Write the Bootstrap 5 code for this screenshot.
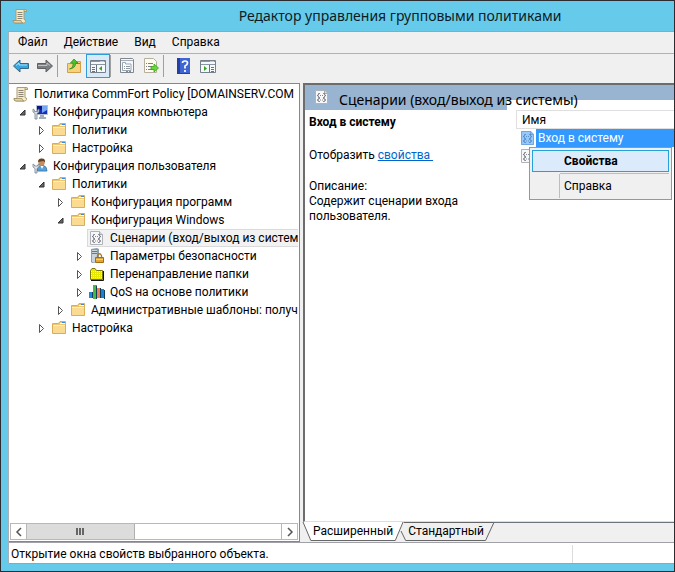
<!DOCTYPE html>
<html lang="ru">
<head>
<meta charset="utf-8">
<meta name="viewport" content="width=device-width, initial-scale=1">
<title>Редактор управления групповыми политиками</title>
<link href="https://cdn.jsdelivr.net/npm/bootstrap@5.3.0/dist/css/bootstrap.min.css" rel="stylesheet">
<style>
body{font-family:Roboto,"Noto Sans",sans-serif;font-size:12px;line-height:18px;color:#000;background:#66cbea}
button{font:inherit;color:inherit;background:none;border:0;padding:0}
.window{border:1px solid #2b2b30;padding:0 0 7px 7px;background:#66cbea}
.titlebar{height:30px}
.titlebar h1,.heading h2{font-family:"Noto Sans","Open Sans",sans-serif;font-size:14px;line-height:20px;font-weight:400}
.titlebar h1{color:#0c1c26;padding-left:98px}
.client{background:#f0f0f0;border-top:1px solid #8ab;border-left:1px solid #a8b0b8}
.menus{height:22px;gap:16px;padding:0 0 1px 9px;border-bottom:1px solid #b0b0b8}
.tools{height:29px;padding:0 0 5px 4px}
.tool{width:24px;height:24px}
.tool.on{border:1px solid #2f9bd8;background:#d8eaf8}
.rule{width:1px;height:22px;background:#a0a0a0}
.icon{width:16px;height:16px;display:block;flex:none}
.back{color:#36a7e2}.forward{color:#7c7f82}
.tree-pane{flex:0 0 291px;border:1px solid #828790;border-left:0;background:#fff}
.tree{padding:1px 1px 0 0}
.tree-row{height:18px;padding-left:4px}
.tree-row .label{padding-left:5px;white-space:pre}
.tree-row.lv1{padding-left:9px}.tree-row.lv2{padding-left:28px}.tree-row.lv3{padding-left:47px}.tree-row.lv4{padding-left:66px}
.twist{width:14px;height:16px;flex:none}
.tree-row.picked{margin-left:78px;padding-left:1px;border:1px solid #dadada;border-right:0;background:#f2f2f2}
.scroller{height:17px;margin:0 1px 1px;border:1px solid #b8b8b8}
.scroller .arrow{width:16px;border-right:1px solid #b8b8b8}
.scroller .arrow:last-child{border-right:0;border-left:1px solid #b8b8b8}
.thumb{flex:0 0 108px;background:#dcdcdc;border-right:1px solid #b0b0b0}
.details{margin-left:3px}
.view{background:#fff;border:solid #6d6d6d;border-width:2px 0 1px 2px;border-bottom-color:#ddd}
.heading{height:25px;padding-left:9px;gap:9px;background:linear-gradient(#99b4d1,#99b4d1) 0 0/100% 15px no-repeat,linear-gradient(#99b4d1,#99b4d1) 0 0/202px 25px no-repeat}
.heading h2{padding-top:5px;white-space:nowrap}
.info{flex:0 0 211px;padding:5px 40px 0 4px;line-height:15px}
.info p{margin:18px 0 16px}
.info a{color:#0066cc}
.colhead{height:19px;border:1px solid #dfdfdf;border-right:0;padding-left:5px}
.item{height:18px;padding-left:4px}
.item .name{background:#3399ff;color:#fff;padding-left:2px}
.popup{position:absolute;left:13px;top:37px;width:143px;height:53px;border:1px solid #979797;background:#f0f0f0;padding:2px;z-index:2}
.popup button{display:block;text-align:left;width:100%;padding-left:31px}
.popup .hot{height:22px;border:1px solid #26a0da;background:#dcebfc;font-weight:700}
.popup .rest{margin-left:27px;width:110px;height:24px;border-left:1px solid #bdbdbd;padding-left:4px}
.popup .line{border-top:1px solid #bdbdbd;margin-left:28px;margin-top:1px}
.tabs{height:20px}
.tab{height:19px;position:relative;line-height:19px;z-index:0}
.tabs .first{padding:0 8px 0 10px}
.tabs .second{padding:0 10px 0 7px}
.tab svg{position:absolute;left:0;top:0;width:100%;height:100%;z-index:-1;overflow:visible}
.status{height:22px;border-top:1px solid #a0a0a8;border-bottom:1px solid #a0a0a8;background:#fff;padding:2px 0 0 2px}
.status .cell{width:102px;border-left:1px solid #dcdcdc}
</style>
<script src="https://cdn.jsdelivr.net/npm/bootstrap@5.3.0/dist/js/bootstrap.bundle.min.js"></script>
</head>
<body>
<svg class="d-none" aria-hidden="true">
<symbol id="scroll" viewBox="0 0 16 16"><path d="M4 1.500h9.500q1.500 0 1 2H12v8q2 0 1.500 2-.5 1.500-2 1.500H3Q1 15 1 12.500h3z" fill="#f6ecc9" stroke="#ad9c70"/><path d="M12 3.500V2q.5-1 1.500-.5 1.500.5 1 2zM1 12.500h8q0 2 2 2.500H3q-2 0-2-2.500z" fill="#e4d5a4" stroke="#a08f66" stroke-width=".8"/><path d="M5.500 4.500h5M5.500 6.500h5M5.500 8.500h5M5.500 10.500h5" stroke="#8b8578"/></symbol>
<symbol id="folder" viewBox="0 0 16 16"><path d="M1.500 3.500h6l1.500-2h5.500v12h-13z" fill="#eec66d" stroke="#d9ae58"/><path d="M2 5h12v8H2z" fill="#fadb91"/><path d="M9 3.500h5" stroke="#fff"/><path d="M11 2.500h3" stroke="#3d8ad8"/><path d="M2 5.500h12" stroke="#fff0bd"/></symbol>
<symbol id="script" viewBox="0 0 16 16"><path d="M1.500 1.500h9l3 3v10h-12z" fill="#f7f7f7" stroke="#b0b3b8"/><path d="M10.500 1.500v3h3" fill="#ddd" stroke="#a6a9b0"/><path d="M6 4.500H4.500v1.500L3 6.500l1.500.5v1.500H6M9 4.500h1.500v1.500l1.500.5-1.500.5v1.500H9M6 9.500H4.500v1L3 11l1.500.5v1H6M9 9.500h1.500v1L12 11l-1.500.5v1H9M6 6.500h1M8 6.500h1M6 11h1M8 11h1" fill="none" stroke="#686e7b" stroke-width=".8"/></symbol>
<symbol id="computer" viewBox="0 0 16 16"><path d="M4.500 1.500h11v9h-11z" fill="#152fba" stroke="#b7c0d0"/><path d="M10 2h5v4l-5 3z" fill="#78a7f2"/><path d="M5 2h5v3L5 8z" fill="#0a1689"/><path d="M8 11h4v2h2v2H7v-2h1z" fill="#a5adb8"/><path d="M1 5v3l2 1.500V15h2V9.500L7 8V5L5.500 6v1.500h-3V6z" fill="#dce2e9" stroke="#74808e" stroke-width=".8"/></symbol>
<symbol id="person" viewBox="0 0 16 16"><path d="M5.500 13q-.5-5 4-5.500h2q3.500 1 3.500 5.500z" fill="#5ba0d0" stroke="#3f83b3"/><circle cx="9.500" cy="4.500" r="3.200" fill="#c98e5f"/><path d="M6 4q0-4 4-3.500 3.500 0 3 4L11.500 3z" fill="#664125"/><path d="M8.500 8l1.500 3 1.500-3z" fill="#fff"/><path d="M1 6v3l2 1.500V15h2v-4.500L7 9V6L5.500 7v1h-3V7z" fill="#e2e8ed" stroke="#74808e" stroke-width=".8"/></symbol>
<symbol id="open" viewBox="0 0 14 16"><path d="M7 6v5H2z" fill="#666" stroke="#333"/></symbol>
<symbol id="shut" viewBox="0 0 14 16"><path d="M2.500 4.500v8l4-4z" fill="#fff" stroke="#555"/></symbol>
<symbol id="server" viewBox="0 0 16 16"><path d="M2 1l6-1 2 1v13l-7 1-1-1z" fill="#8b9caa"/><path d="M3 2h5v12H3z" fill="#cad4db"/><path d="M3 3.500h5M3 5.500h5" stroke="#667888"/><path d="M8.500 9V7.500q2-3.500 4 0V9" fill="none" stroke="#a27b24" stroke-width="1.300"/><path d="M6.500 9.500h8v5h-8z" fill="#dfa63a" stroke="#a26e0d"/><path d="M7 11.500h7" stroke="#f7d075"/></symbol>
<symbol id="redirect" viewBox="0 0 16 16"><path d="M1.500 13.500V4.500l1.500-2h3l1.500 2h6v9z" fill="#e8e800" stroke="#77770d"/><path d="M2 5.500h11M2 7.500h11M2 9.500h11M2 11.500h11" stroke="#ffffa0" stroke-dasharray="1 1"/><path d="M14.500 5v9.500H2" fill="none" stroke="#111"/></symbol>
<symbol id="bars" viewBox="0 0 16 16"><path d="M0 8h4v6H0z" fill="#178bdf"/><path d="M4 1h4v14H4z" fill="#45b845"/><path d="M8 4h4v10H8z" fill="#ed8055"/><path d="M12 5h3v9h-3z" fill="#1683d8"/><path d="M3.500 8v6M7.500 2v13M11.500 4v10M15.500 6v9" stroke="#173d55"/></symbol>
<symbol id="arrow" viewBox="0 0 16 16"><path d="M.5 8L7 2v3.500h8.500v5H7V14z" fill="currentColor" stroke="#356784"/><path d="M3 7.500L6 5v2h8" fill="none" stroke="#fff" stroke-opacity=".6"/></symbol>
<symbol id="panel" viewBox="0 0 16 16"><path d="M.5 2.500h15v12H.5z" fill="#f7f8f9" stroke="#75818e"/><path d="M1 3.500h14M1 6.500h14" stroke="#8b96a3"/><path d="M10.500 3.500h4" stroke="#fff" stroke-dasharray="1 1"/><path d="M6.500 7v7M2 9.500h3M2 11.500h3M2 13.500h3" stroke="#667380"/></symbol>
</svg>

<main class="window min-vh-100 d-flex flex-column overflow-hidden">
<header class="titlebar d-flex align-items-center"><svg class="icon ms-1"><use href="#scroll"/></svg><h1 class="flex-grow-1 text-center m-0">Редактор управления групповыми политиками</h1></header>
<div class="client flex-grow-1 d-flex flex-column">
<nav class="menus d-flex align-items-center" aria-label="Меню"><button>Файл</button><button>Действие</button><button>Вид</button><button>Справка</button></nav>
<div class="tools d-flex align-items-center" role="toolbar" aria-label="Инструменты">
<button aria-label="Назад"><svg class="icon back"><use href="#arrow"/></svg></button>
<button class="ms-2" aria-label="Вперёд"><svg class="icon forward" viewBox="0 0 16 16"><path d="M15.500 8L9 2v3.500H.5v5H9V14z" fill="currentColor" stroke="#5e6063"/><path d="M1 7.500h9V5l3 2.500" fill="none" stroke="#c2c2c2"/></svg></button>
<span class="rule mx-1"></span>
<button class="ms-1" aria-label="Вверх"><svg class="icon" viewBox="0 0 16 16"><path d="M1.500 5.500h7l1.500-2h4.500v11h-13z" fill="#f7d27c" stroke="#d0a04b"/><path d="M10 5.500h4" stroke="#3d8ad8"/><path d="M3.500 11q4-1 3.500-6H4.500L8 1l4 4H9.500q.5 5-6 6z" fill="#4cc52a" stroke="#2b8617" stroke-width=".7"/></svg></button>
<button class="tool on d-flex align-items-center justify-content-center ms-1" aria-label="Дерево" aria-pressed="true"><svg class="icon" viewBox="0 0 16 16"><use href="#panel"/><path d="M12 8v5l-3-2.500z" fill="#32a325"/></svg></button>
<span class="rule"></span>
<button class="ms-2" aria-label="Свойства"><svg class="icon" viewBox="0 0 16 16"><path d="M1.500.5h12l1 1v13h-13z" fill="#f7f8f9" stroke="#7f8790"/><path d="M2 2.500h12" stroke="#a3abb4"/><path d="M3.500 4.500h3V6H12v6.500H3.500z" fill="#fff" stroke="#9aa5af"/><path d="M5 8.500h1M7 8.500h4M5 10.500h1M7 10.500h4" stroke="#8a97a3"/><path d="M7 13.500h2M10 13.500h2" stroke="#37a5d6"/></svg></button>
<button class="ms-2" aria-label="Экспорт"><svg class="icon" viewBox="0 0 16 16"><path d="M1.500.5h9l3 3v11h-12z" fill="#fdfbef" stroke="#b5b09c"/><path d="M3 5.500h1M5 5.500h5M3 8.500h1M5 8.500h4M3 11.500h1M5 11.500h5" stroke="#827d87"/><path d="M8 8.500h3V6l4.500 4-4.500 4v-2.500H8z" fill="#65d83b" stroke="#3aa41b" stroke-width=".8"/></svg></button>
<span class="rule mx-1"></span>
<button class="ms-2" aria-label="Справка"><svg class="icon" viewBox="0 0 16 16"><path d="M1 0h13v16H1z" fill="#2440a5"/><path d="M4 0h10v15H4z" fill="#3f65d2"/><path d="M6.500 5q0-2 2.500-2t2.500 2Q11.500 7 9 8v2.500M9 12v2" fill="none" stroke="#fff" stroke-width="1.700"/></svg></button>
<button class="ms-2" aria-label="Панель действий"><svg class="icon" viewBox="0 0 16 16"><path d="M.5 2.500h15v12H.5z" fill="#f7f8f9" stroke="#75818e"/><path d="M1 3.500h14M1 6.500h14" stroke="#8b96a3"/><path d="M10.500 3.500h4" stroke="#fff" stroke-dasharray="1 1"/><path d="M9.500 7v7M11 9.500h3M11 11.500h3M11 13.500h3" stroke="#667380"/><path d="M4 8v5l3-2.500z" fill="#32a325"/></svg></button>
</div>
<div class="d-flex flex-grow-1">
<section class="tree-pane d-flex flex-column overflow-hidden">
<div class="tree flex-grow-1" role="tree" aria-label="Дерево консоли">
<div role="treeitem" class="tree-row d-flex align-items-center"><svg class="icon"><use href="#scroll"/></svg><span class="label">Политика CommFort Policy [DOMAINSERV.COM</span></div>
<div role="treeitem" class="tree-row lv1 d-flex align-items-center"><svg class="twist"><use href="#open"/></svg><svg class="icon"><use href="#computer"/></svg><span class="label">Конфигурация компьютера</span></div>
<div role="treeitem" class="tree-row lv2 d-flex align-items-center"><svg class="twist"><use href="#shut"/></svg><svg class="icon"><use href="#folder"/></svg><span class="label">Политики</span></div>
<div role="treeitem" class="tree-row lv2 d-flex align-items-center"><svg class="twist"><use href="#shut"/></svg><svg class="icon"><use href="#folder"/></svg><span class="label">Настройка</span></div>
<div role="treeitem" class="tree-row lv1 d-flex align-items-center"><svg class="twist"><use href="#open"/></svg><svg class="icon"><use href="#person"/></svg><span class="label">Конфигурация пользователя</span></div>
<div role="treeitem" class="tree-row lv2 d-flex align-items-center"><svg class="twist"><use href="#open"/></svg><svg class="icon"><use href="#folder"/></svg><span class="label">Политики</span></div>
<div role="treeitem" class="tree-row lv3 d-flex align-items-center"><svg class="twist"><use href="#shut"/></svg><svg class="icon"><use href="#folder"/></svg><span class="label">Конфигурация программ</span></div>
<div role="treeitem" class="tree-row lv3 d-flex align-items-center"><svg class="twist"><use href="#open"/></svg><svg class="icon"><use href="#folder"/></svg><span class="label">Конфигурация Windows</span></div>
<div role="treeitem" aria-selected="true" class="tree-row picked d-flex align-items-center overflow-hidden"><svg class="icon"><use href="#script"/></svg><span class="label">Сценарии (вход/выход из системы</span></div>
<div role="treeitem" class="tree-row lv4 d-flex align-items-center"><svg class="twist"><use href="#shut"/></svg><svg class="icon"><use href="#server"/></svg><span class="label">Параметры безопасности</span></div>
<div role="treeitem" class="tree-row lv4 d-flex align-items-center"><svg class="twist"><use href="#shut"/></svg><svg class="icon"><use href="#redirect"/></svg><span class="label">Перенаправление папки</span></div>
<div role="treeitem" class="tree-row lv4 d-flex align-items-center"><svg class="twist"><use href="#shut"/></svg><svg class="icon"><use href="#bars"/></svg><span class="label">QoS на основе политики</span></div>
<div role="treeitem" class="tree-row lv3 d-flex align-items-center overflow-hidden"><svg class="twist"><use href="#shut"/></svg><svg class="icon"><use href="#folder"/></svg><span class="label">Административные шаблоны: получ</span></div>
<div role="treeitem" class="tree-row lv2 d-flex align-items-center"><svg class="twist"><use href="#shut"/></svg><svg class="icon"><use href="#folder"/></svg><span class="label">Настройка</span></div>
</div>
<div class="scroller d-flex"><button class="arrow d-flex align-items-center justify-content-center" aria-label="Влево"><svg width="8" height="10"><path d="M6 1L2 5l4 4" fill="none" stroke="#555" stroke-width="1.500"/></svg></button><span class="thumb d-flex align-items-center justify-content-center"><svg width="9" height="7"><path d="M1 0v7M4 0v7M7 0v7" stroke="#666" stroke-width="2"/></svg></span><span class="flex-grow-1"></span><button class="arrow d-flex align-items-center justify-content-center" aria-label="Вправо"><svg width="8" height="10"><path d="M2 1l4 4-4 4" fill="none" stroke="#555" stroke-width="1.500"/></svg></button></div>
</section>
<section class="details flex-grow-1 d-flex flex-column">
<div class="view flex-grow-1">
<div class="heading d-flex"><svg class="icon mt-1"><use href="#script"/></svg><h2 class="m-0">Сценарии (вход/выход из системы)</h2></div>
<div class="d-flex">
<div class="info"><b>Вход в систему</b><p>Отобразить <a href="#">свойства&nbsp;</a></p>Описание:<br>Содержит сценарии входа<br>пользователя.</div>
<div class="flex-grow-1 position-relative">
<div class="colhead d-flex align-items-center">Имя</div>
<div class="item d-flex align-items-center"><svg class="icon" viewBox="0 0 16 16"><use href="#script"/><path d="M1 1h10l3 3v11H1z" fill="#3399ff" fill-opacity=".5"/></svg><span class="name flex-grow-1">Вход в систему</span></div>
<div class="item d-flex align-items-center"><svg class="icon"><use href="#script"/></svg></div>
<div class="popup" role="menu"><button class="hot" role="menuitem">Свойства</button><div class="line"></div><button class="rest" role="menuitem">Справка</button></div>
</div>
</div>
</div>
<div class="tabs d-flex" role="tablist">
<button class="tab first" role="tab" aria-selected="true"><svg viewBox="0 0 100 19" preserveAspectRatio="none"><path d="M0 0l8 18.500h86L102 0" fill="#fff" stroke="#666" vector-effect="non-scaling-stroke"/></svg>Расширенный</button>
<button class="tab second" role="tab" aria-selected="false"><svg viewBox="0 0 100 19" preserveAspectRatio="none"><path d="M0 9l5 9.500h86L100 .5H3" fill="#f0f0f0" stroke="#666" vector-effect="non-scaling-stroke"/></svg>Стандартный</button>
<span class="flex-grow-1 border-top border-secondary"></span>
</div>
</section>
</div>
<footer class="status d-flex"><span class="flex-grow-1">Открытие окна свойств выбранного объекта.</span><span class="cell"></span></footer>
</div>
</main>
</body>
</html>
